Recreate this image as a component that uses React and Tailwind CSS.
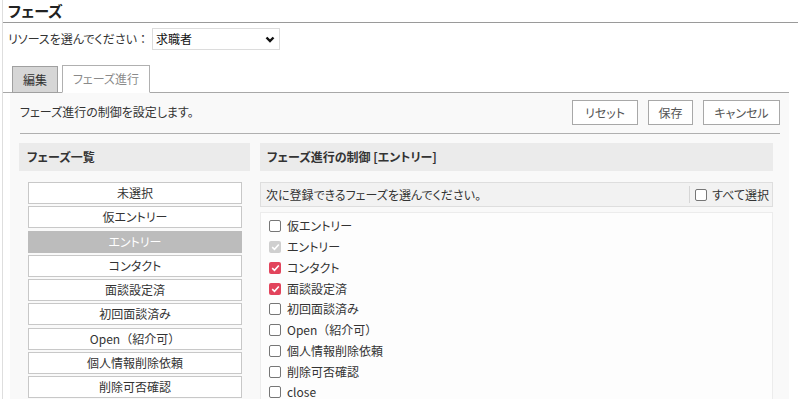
import React from "react";

const N = ({ children }) => (
  <span className="[font-feature-settings:normal]">{children}</span>
);

const phases = [
  "未選択",
  "仮エントリー",
  "エントリー",
  "コンタクト",
  "面談設定済",
  "初回面談済み",
  "Open（紹介可）",
  "個人情報削除依頼",
  "削除可否確認",
];

const checks = [
  { label: "仮エントリー", state: "off" },
  { label: "エントリー", state: "disabled" },
  { label: "コンタクト", state: "on" },
  { label: "面談設定済", state: "on" },
  { label: "初回面談済み", state: "off" },
  { label: "Open（紹介可）", state: "off" },
  { label: "個人情報削除依頼", state: "off" },
  { label: "削除可否確認", state: "off" },
  { label: "close", state: "off" },
];

function Label({ text }) {
  if (text.startsWith("Open")) {
    return (
      <span>
        Open<N>（</N>紹介可<N>）</N>
      </span>
    );
  }
  return <span>{text}</span>;
}

function Box({ state }) {
  if (state === "on" || state === "disabled") {
    return (
      <span
        className={
          "flex w-[12px] h-[12px] rounded-[2px] items-center justify-center shrink-0 " +
          (state === "on" ? "bg-[#e2445c]" : "bg-[#cfcfcf]")
        }
      >
        <svg width="9" height="8" viewBox="0 0 9 8">
          <polyline
            points="1.2,4.2 3.5,6.3 7.8,1.5"
            fill="none"
            stroke="white"
            strokeWidth="1.6"
          />
        </svg>
      </span>
    );
  }
  return (
    <span className="block w-[12px] h-[12px] rounded-[2px] border border-[#767676] bg-white shrink-0" />
  );
}

export default function App() {
  return (
    <div
      className="w-[798px] h-[399px] overflow-hidden bg-white text-[#333] text-[12px] pl-[2px] [font-feature-settings:'palt']"
      style={{ fontFamily: '"Noto Sans CJK JP", "Noto Sans", sans-serif' }}
    >
      <div className="border-l border-[#dedede] h-full">
        {/* Title */}
        <div className="h-[22px] pl-[5px] pt-[1px] text-[15px] font-bold text-[#222] leading-[20px]">
          フェーズ
        </div>
        <div className="h-px bg-[#9a9a9a]" />

        {/* Resource select */}
        <div className="flex items-center pl-[5px] mt-[5px] h-[22px]">
          <span className="w-[144px]">
            リソースを選んでください<N>：</N>
          </span>
          <div className="w-[128px] h-[22px] border border-[#dcdcdc] bg-white flex items-center justify-between pl-[3px] pr-[4px] text-[#111]">
            <span>求職者</span>
            <svg width="10" height="7" viewBox="0 0 10 7">
              <polyline
                points="1.5,1.5 5,5 8.5,1.5"
                fill="none"
                stroke="#111"
                strokeWidth="2.4"
              />
            </svg>
          </div>
        </div>

        {/* Tabs */}
        <div className="flex items-end mt-[15px] mr-[9px] border-b border-[#a8a8a8] pl-[9px] gap-[4px] h-[28px]">
          <div className="w-[46px] h-[27px] -mb-px bg-[#d6d6d6] border border-[#a0a0a0] flex items-center justify-center text-[#333]">
            編集
          </div>
          <div className="w-[88px] h-[28px] -mb-px bg-white border border-[#b0b0b0] border-b-white flex items-center justify-center text-[#8a8a8a]">
            フェーズ進行
          </div>
        </div>

        {/* Panel */}
        <div className="ml-[7px] mr-[9px] bg-[#f9f9f9] h-[320px] px-[10px] pr-[9px] pt-[7px]">
          <div className="flex items-center justify-between h-[25px]">
            <span className="self-start mt-[3px]">フェーズ進行の制御を設定します。</span>
            <div className="flex gap-[10px]">
              <button className="w-[66px] h-[25px] border border-[#a8a8a8] bg-white text-[#555]">
                リセット
              </button>
              <button className="w-[45px] h-[25px] border border-[#a8a8a8] bg-white text-[#555]">
                保存
              </button>
              <button className="w-[77px] h-[25px] border border-[#a8a8a8] bg-white text-[#555]">
                キャンセル
              </button>
            </div>
          </div>
          <div className="h-px bg-[#b0b0b0] mt-[8px]" />

          <div className="flex mt-[9px] gap-[10px] -ml-[1px] pr-[7px]">
            {/* Left column */}
            <div className="w-[231px] shrink-0">
              <div className="h-[28px] bg-[#ebebeb] flex items-center pl-[8px] font-bold">
                フェーズ一覧
              </div>
              <div className="flex flex-col gap-[2.25px] mt-[11px] px-[9px] pr-[8px]">
                {phases.map((p) =>
                  p === "エントリー" ? (
                    <div
                      key={p}
                      className="h-[22px] bg-[#bcbcbc] text-white flex items-center justify-center"
                    >
                      {p}
                    </div>
                  ) : (
                    <div
                      key={p}
                      className="h-[22px] bg-white border border-[#c8c8c8] flex items-center justify-center"
                    >
                      <Label text={p} />
                    </div>
                  )
                )}
              </div>
            </div>

            {/* Right column */}
            <div className="flex-1">
              <div className="h-[28px] bg-[#ebebeb] flex items-center pl-[7px] font-bold">
                フェーズ進行の制御 [エントリー]
              </div>
              <div className="mt-[11px] h-[25px] bg-[#f2f2f2] border border-[#dedede] flex items-center pl-[5px]">
                <span className="flex-1">次に登録できるフェーズを選んでください。</span>
                <div className="h-[17px] border-l border-[#d6d6d6] flex items-center pl-[5px] pr-[3px] gap-[5px]">
                  <Box state="off" />
                  <span>すべて選択</span>
                </div>
              </div>
              <div className="mt-[5px] h-[200px] bg-[#fdfdfd] border border-[#ececec] pt-[3px] pl-[8px]">
                {checks.map((c) => (
                  <div key={c.label} className="h-[20.75px] flex items-center gap-[6px]">
                    <Box state={c.state} />
                    <Label text={c.label} />
                  </div>
                ))}
              </div>
            </div>
          </div>
        </div>
      </div>
    </div>
  );
}
